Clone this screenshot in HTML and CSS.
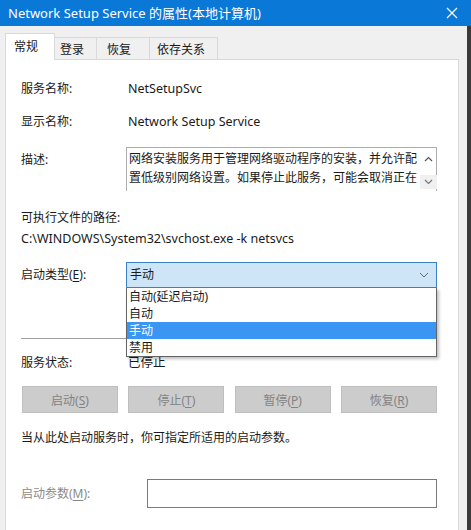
FILE: index.html
```html
<!DOCTYPE html>
<html lang="zh-CN">
<head>
  <meta charset="UTF-8" />
  <title>Network Setup Service 的属性(本地计算机)</title>
  <link rel="stylesheet" href="styles.css">
</head>
<body>
  <div class="titlebar">
    <span class="title">Network Setup Service 的属性(本地计算机)</span>
    <svg class="close" width="12" height="12" viewBox="0 0 12 12">
      <path d="M1 1 L11 11 M11 1 L1 11" stroke="#fff" stroke-width="1.2" fill="none" />
    </svg>
  </div>

  <div class="window">
    <div class="tabs">
      <div class="tab active">常规</div>
      <div class="tab">登录</div>
      <div class="tab">恢复</div>
      <div class="tab">依存关系</div>
    </div>

    <div class="panel">
      <div class="row first">
        <span class="label">服务名称:</span>
        <span class="value">NetSetupSvc</span>
      </div>
      <div class="row gap15">
        <span class="label">显示名称:</span>
        <span class="value">Network Setup Service</span>
      </div>
      <div class="row desc-row">
        <span class="label desc-label">描述:</span>
        <div class="desc-box">
          <div class="desc-text">网络安装服务用于管理网络驱动程序的安装，并允许配置低级别网络设置。如果停止此服务，可能会取消正在</div>
          <div class="desc-scroll">
            <svg width="9" height="6" viewBox="0 0 9 6"><path d="M1 5 L4.5 1.5 L8 5" stroke="#555" stroke-width="1.2" fill="none" /></svg>
            <svg class="down" width="9" height="6" viewBox="0 0 9 6"><path d="M1 1 L4.5 4.5 L8 1" stroke="#777" stroke-width="1.2" fill="none" /></svg>
          </div>
        </div>
      </div>

      <div class="path-label">可执行文件的路径:</div>
      <div class="path">C:\WINDOWS\System32\svchost.exe -k netsvcs</div>

      <div class="row startup-row">
        <span class="label">启动类型(<u>E</u>):</span>
        <div class="combo-wrap">
          <div class="combo">
            <span>手动</span>
            <svg width="10" height="6" viewBox="0 0 10 6"><path d="M1 1 L5 5 L9 1" stroke="#666" stroke-width="1" fill="none" /></svg>
          </div>
          <ul class="dropdown">
            <li>自动(延迟启动)</li>
            <li>自动</li>
            <li class="selected">手动</li>
            <li>禁用</li>
          </ul>
        </div>
      </div>

      <hr class="sep" />

      <div class="row status-row">
        <span class="label">服务状态:</span>
        <span class="value">已停止</span>
      </div>

      <div class="buttons">
        <button disabled>启动(<u>S</u>)</button>
        <button disabled>停止(<u>T</u>)</button>
        <button disabled>暂停(<u>P</u>)</button>
        <button disabled>恢复(<u>R</u>)</button>
      </div>

      <p class="hint">当从此处启动服务时，你可指定所适用的启动参数。</p>

      <div class="row param-row">
        <span class="label param-label">启动参数(<u>M</u>):</span>
        <input type="text" class="param-input" disabled />
      </div>
    </div>
  </div>
</body>
</html>
```

FILE: styles.css
```css
body {
  margin: 0;
  background: #f0f0f0;
  font-family: "Noto Sans", "Noto Sans CJK SC", sans-serif;
  font-size: 12px;
  color: #1a1a1a;
  height: 530px;
  overflow: hidden;
}
.titlebar {
  height: 26px;
  background: #0a78d7;
  color: #fff;
  display: flex;
  align-items: center;
  justify-content: space-between;
  padding: 0 13px 0 8px;
}
.title {
  font-size: 13px;
  line-height: 26px;
}
.window {
  border-right: 4px solid #3a3a3a;
  height: 504px;
  padding-top: 7px;
  box-sizing: border-box;
}
.tabs {
  display: flex;
  align-items: flex-end;
  padding-left: 5px;
  height: 26px;
}
.tab {
  height: 22px;
  line-height: 24px;
  padding: 0 7px;
  border: 1px solid #d9d9d9;
  border-bottom: none;
  border-left: none;
  box-sizing: border-box;
  background: #f0f0f0;
}
.tab.active {
  height: 27px;
  line-height: 26px;
  width: 50px;
  padding-left: 8px;
  border-left: 1px solid #d9d9d9;
  background: #fff;
  position: relative;
  top: 1px;
  z-index: 1;
}
.tab:nth-child(2) { width: 42px; padding-left: 5px; }
.tab:nth-child(3) { width: 53px; padding-left: 10px; }
.tab:nth-child(4) { width: 68px; padding-left: 7px; }
.panel {
  margin: 0 8px 0 5px;
  background: #fff;
  border: 1px solid #d9d9d9;
  height: 480px;
  box-sizing: border-box;
  padding: 20px 21px 0 15px;
  position: relative;
}
.row {
  display: flex;
  align-items: center;
  line-height: 18px;
}
.row.first { margin-top: 0; }
.gap15 { margin-top: 15px; }
.label {
  width: 105px;
  flex-shrink: 0;
}
.value {
  padding-left: 2px;
  font-size: 12.5px;
}
.desc-row {
  margin-top: 16px;
  align-items: flex-start;
}
.desc-label {
  margin-top: 4px;
}
.desc-box {
  flex: 1;
  height: 44px;
  border: 1px solid #adadad;
  border-bottom: none;
  box-sizing: border-box;
  display: flex;
}
.desc-text {
  flex: 1;
  padding: 1px 0 0 2px;
  line-height: 19px;
  overflow: hidden;
}
.desc-scroll {
  width: 16px;
  display: flex;
  flex-direction: column;
  align-items: center;
  padding-top: 8px;
}
.desc-scroll .down {
  margin-top: 17px;
  background: #f0f0f0;
  box-shadow: 0 0 0 4px #f0f0f0;
}
.path-label {
  margin-top: 18px;
  line-height: 18px;
}
.path {
  margin-top: 3px;
  line-height: 18px;
  font-size: 12.5px;
}
.startup-row {
  margin-top: 14px;
}
.combo-wrap {
  flex: 1;
  position: relative;
}
.combo {
  height: 26px;
  box-sizing: border-box;
  border: 1px solid #3a82c4;
  background: #cde5f7;
  display: flex;
  align-items: center;
  justify-content: space-between;
  padding: 0 7px 0 3px;
}
.dropdown {
  position: absolute;
  left: 0;
  right: 0;
  top: 26px;
  margin: 0;
  padding: 0;
  list-style: none;
  background: #fff;
  border: 1px solid #646464;
  border-top: none;
  box-shadow: 2px 2px 3px rgba(0,0,0,0.25);
  z-index: 2;
}
.dropdown li {
  height: 17px;
  line-height: 17px;
  padding-left: 2px;
}
.dropdown li.selected {
  background: #3a96f2;
  color: #fff;
}
.sep {
  margin: 50px 0 0 0;
  border: none;
  border-top: 1px solid #a0a0a0;
}
.status-row {
  margin-top: 15px;
}
.buttons {
  display: flex;
  justify-content: space-between;
  margin: 14px 0 0 1px;
}
.buttons button {
  width: 96px;
  height: 27px;
  background: #cccccc;
  border: 1px solid #bfbfbf;
  color: #838383;
  font-family: inherit;
  font-size: 12px;
  padding: 0;
}
.hint {
  margin: 16px 0 0 0;
  line-height: 18px;
}
.param-row {
  margin-top: 32px;
}
.param-label {
  width: 126px;
  color: #8a8a8a;
}
.param-input {
  flex: 1;
  height: 29px;
  box-sizing: border-box;
  border: 1px solid #7a7a7a;
  background: #fff;
  margin: 0;
}
u {
  text-decoration: underline;
  text-underline-offset: 2px;
}
```
